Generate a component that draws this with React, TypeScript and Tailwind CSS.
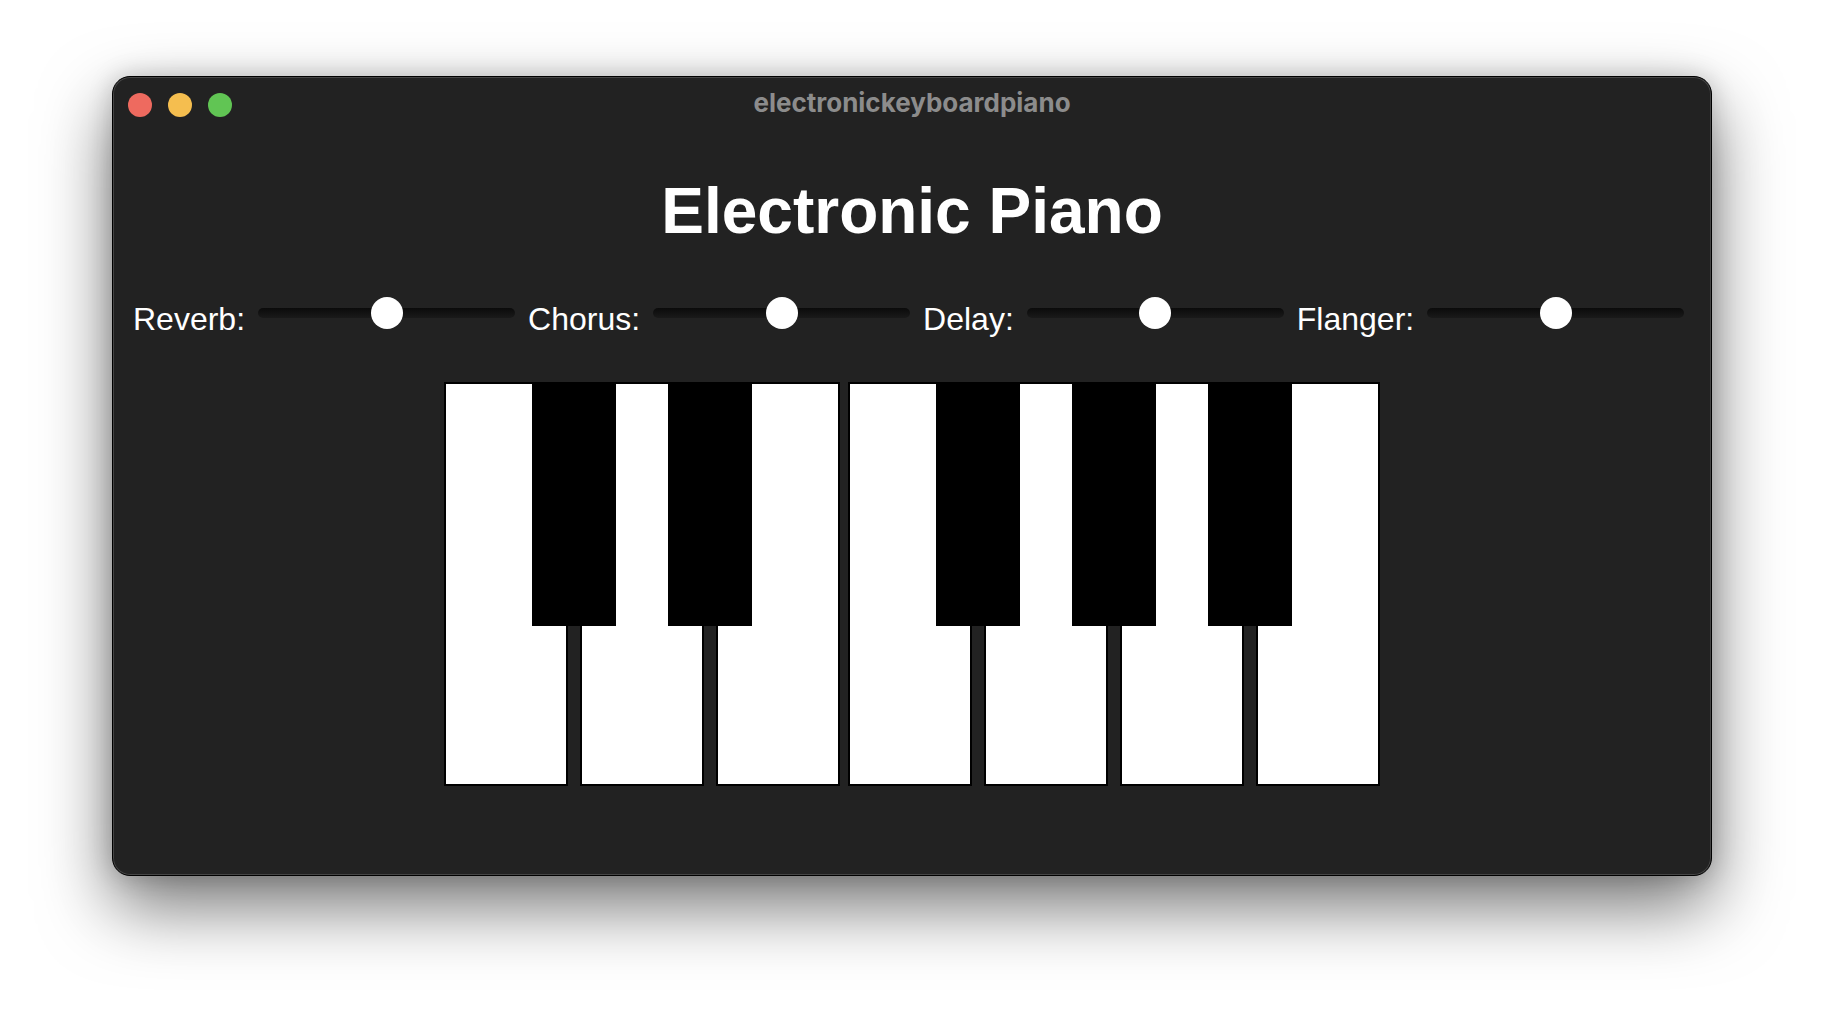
const effects = ["Reverb:", "Chorus:", "Delay:", "Flanger:"];

// C D E F G A B with sharps between, one octave
const keys: ("white" | "black")[] = [
  "white",
  "black",
  "white",
  "black",
  "white",
  "white",
  "black",
  "white",
  "black",
  "white",
  "black",
  "white",
];

const Slider = () => (
  <div className="relative flex h-[32px] w-[257px] shrink-0 items-center justify-center">
    <div className="absolute inset-x-0 top-1/2 h-[10px] -translate-y-1/2 rounded-full bg-linear-to-b from-[#0b0b0b] to-[#1a1a1a]" />
    <div className="relative size-[32px] rounded-full bg-white" />
  </div>
);

const Piano = () => (
  <div className="flex items-start justify-center">
    {keys.map((k, i) =>
      k === "white" ? (
        <div
          key={i}
          className="mx-[4px] h-[404px] w-[124px] shrink-0 border-2 border-black bg-white"
        />
      ) : (
        <div
          key={i}
          className="relative z-10 -mx-[40px] h-[244px] w-[84px] shrink-0 bg-black"
        />
      )
    )}
  </div>
);

export default function App() {
  return (
    <div className="flex min-h-screen justify-center bg-white pt-[76px]">
      <div className="flex h-[800px] w-[1600px] flex-col rounded-[18px] border border-black bg-[#222222] shadow-[0_30px_70px_rgba(0,0,0,0.55),0_0_24px_rgba(0,0,0,0.18),inset_0_0_0_1px_rgba(255,255,255,0.16)]">
        <div className="grid h-[55px] grid-cols-[1fr_auto_1fr] items-center">
          <div className="flex items-center gap-[16px] pl-[15px]">
            <span className="size-[24px] rounded-full bg-[#ee6a5f]" />
            <span className="size-[24px] rounded-full bg-[#f5be4f]" />
            <span className="size-[24px] rounded-full bg-[#61c554]" />
          </div>
          <div className="mb-[4px] font-['Inter',sans-serif] text-[26px] leading-[30px] font-bold text-[#8c8c8c]">
            electronickeyboardpiano
          </div>
          <div />
        </div>

        <h1 className="mt-[47px] text-center font-['Liberation_Sans',Arial,sans-serif] text-[64px] leading-[64px] font-bold text-white">
          Electronic Piano
        </h1>

        <div className="mt-[47px] flex h-[46px] items-center gap-[13px] pl-[20px] font-['Liberation_Sans',Arial,sans-serif] text-[32px] text-white">
          {effects.map((name) => (
            <div key={name} className="contents">
              <span className="pt-[12px] leading-[36px]">{name}</span>
              <Slider />
            </div>
          ))}
        </div>

        <div className="mt-[46px]">
          <Piano />
        </div>
      </div>
    </div>
  );
}
